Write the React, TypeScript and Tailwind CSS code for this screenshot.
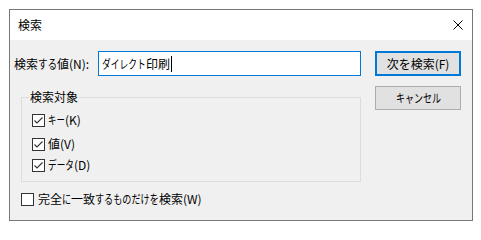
import React from 'react';

const font = "font-['Noto_Sans_CJK_JP','Noto_Sans',sans-serif]";

// Yu Gothic UI draws kana narrower than Noto; squeeze the kana runs horizontally.
function Narrow({ className, children }: { className: string; children: React.ReactNode }) {
  return (
    <span className={`inline-block align-top whitespace-nowrap origin-left ${className}`}>{children}</span>
  );
}

function Check({ checked }: { checked: boolean }) {
  return (
    <span className="w-[13px] h-[13px] border border-[#333333] bg-white flex items-center justify-center shrink-0">
      {checked && (
        <svg width="11" height="11" viewBox="0 0 11 11" fill="none">
          <path d="M1.5 5.5 L4 8 L9.5 2.5" stroke="#333333" strokeWidth="1.1" />
        </svg>
      )}
    </span>
  );
}

export default function App() {
  return (
    <div className={`w-[481px] h-[231px] bg-white pt-[9px] pl-[9px] ${font} text-[12px] leading-[16px] text-black`}>
      <div className="w-[464px] h-[212px] border border-[#777777] flex flex-col">
        {/* Title bar */}
        <div className="h-[30px] bg-white flex items-center justify-between pl-[8px] pr-[9px]">
          <span>検索</span>
          <svg width="10" height="10" viewBox="0 0 10 10" fill="none">
            <path d="M0.5 0.5 L9.5 9.5 M9.5 0.5 L0.5 9.5" stroke="#000" strokeWidth="1" />
          </svg>
        </div>

        {/* Body */}
        <div className="flex-1 bg-[#f0f0f0] flex">
          <div className="w-[351px] shrink-0 flex flex-col">
            <div className="flex items-center mt-[11px]">
              <span className="w-[88px] shrink-0 pl-[4px] whitespace-nowrap">
                検索<Narrow className="w-[19px] scale-x-[0.8]">する</Narrow>値(N):
              </span>
              <div className="w-[263px] h-[25px] border border-[#0078d7] bg-white flex items-center pl-[3px]">
                <span className="whitespace-nowrap">
                  <Narrow className="w-[44px] scale-x-[0.73]">ダイレクト</Narrow>印刷
                </span>
                <span className="w-px h-[16px] bg-black ml-[1px]" />
              </div>
            </div>

            {/* Group box */}
            <div className="ml-[11px] w-[340px] mt-[13px] flex flex-col">
              <div className="h-[16px] flex">
                <span className="w-[8px] shrink-0 h-[8px] self-end border-l border-t border-[#dcdcdc]" />
                <span className="shrink-0 px-[1px] whitespace-nowrap">検索対象</span>
                <span className="flex-1 h-[8px] self-end border-r border-t border-[#dcdcdc]" />
              </div>
              <div className="h-[77px] border-x border-b border-[#dcdcdc] flex flex-col pt-[7px] pl-[10px]">
                <label className="flex items-center gap-[3px]">
                  <Check checked />
                  <span className="whitespace-nowrap">
                    <Narrow className="w-[17px] scale-x-[0.7]">キー</Narrow>(K)
                  </span>
                </label>
                <label className="flex items-center gap-[3px] mt-[8px]">
                  <Check checked />
                  <span>値(V)</span>
                </label>
                <label className="flex items-center gap-[3px] mt-[5px]">
                  <Check checked />
                  <span className="whitespace-nowrap">
                    <Narrow className="w-[26px] scale-x-[0.72]">データ</Narrow>(D)
                  </span>
                </label>
              </div>
            </div>

            <label className="flex items-center gap-[4px] ml-[11px] mt-[9px]">
              <Check checked={false} />
              <span className="whitespace-nowrap">
                完全<Narrow className="w-[9px] scale-x-[0.76]">に</Narrow>一致<Narrow className="w-[64px] scale-x-[0.76]">するものだけを</Narrow>検索(W)
              </span>
            </label>
          </div>

          <div className="flex flex-col pl-[14px] pt-[11px]">
            <button className="w-[86px] h-[25px] border-2 border-[#0078d7] bg-[#e1e1e1] flex items-center justify-center">
              次を検索(F)
            </button>
            <button className="w-[86px] h-[24px] mt-[10px] border border-[#adadad] bg-[#e1e1e1] flex items-center justify-center">
              <Narrow className="w-[45px] scale-x-[0.75]">キャンセル</Narrow>
            </button>
          </div>
        </div>
      </div>
    </div>
  );
}
